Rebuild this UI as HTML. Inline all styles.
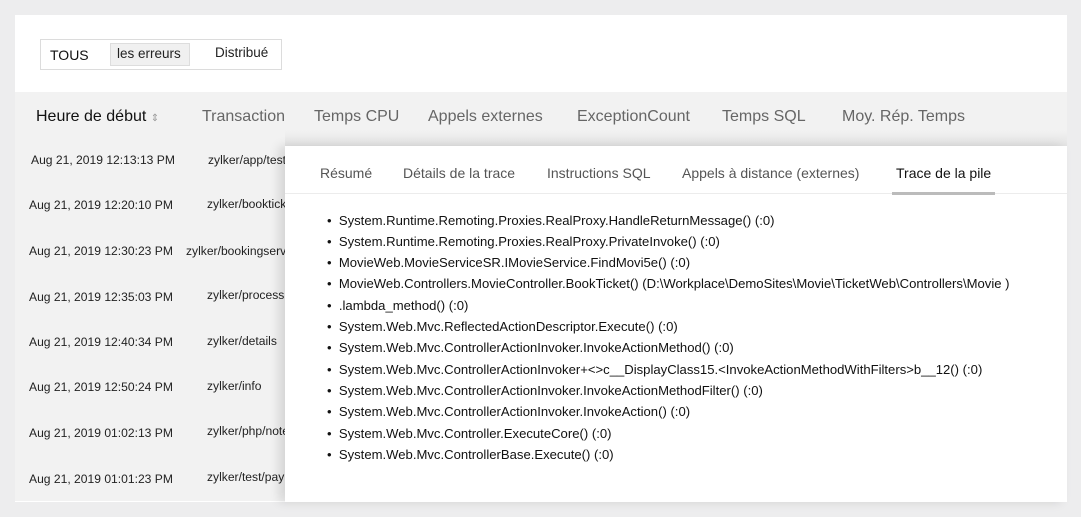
<!DOCTYPE html>
<html><head><meta charset="utf-8"><style>
body{margin:0;width:1081px;height:517px;background:#ededee;font-family:"Liberation Sans",sans-serif;position:relative;overflow:hidden}
.abs{position:absolute;white-space:nowrap}
#top{left:15px;top:15px;width:1052px;height:77px;background:#fff}
#seg{left:40px;top:39px;width:240px;height:29px;border:1px solid #dcdcdc;background:#fff}
#tbl{left:15px;top:92px;width:1052px;height:409px;background:#f2f2f2;border-bottom:1px solid #fff}
.h{top:108px;font-size:16px;color:#666}
.d{font-size:12.1px;color:#222}
#pop{left:285px;top:146px;width:782px;height:356px;background:#fff;box-shadow:-6px 0 10px rgba(0,0,0,.12)}
.t{top:165px;font-size:14px;color:#555}
.s{left:327px;font-size:13.1px;color:#111}
</style></head><body>
<div class="abs" id="top"></div>
<div class="abs" id="seg"></div>
<div class="abs" style="left:50px;top:47px;font-size:14px;color:#111">TOUS</div>
<div class="abs" style="left:110px;top:43px;width:78px;height:21px;background:#f0f0f0;border:1px solid #ddd"></div>
<div class="abs" style="left:117px;top:46px;font-size:13.5px;color:#222">les erreurs</div>
<div class="abs" style="left:215px;top:45px;font-size:13.5px;color:#222">Distribué</div>
<div class="abs" id="tbl"></div>
<div class="abs" style="left:285px;top:130px;width:782px;height:16px;background:linear-gradient(#f2f2f2,#e4e4e4)"></div>
<div class="abs h" style="left:36px;color:#111">Heure de début <span style="font-size:10px;color:#999">&#8661;</span></div>
<div class="abs h" style="left:202px">Transaction</div>
<div class="abs h" style="left:314px">Temps CPU</div>
<div class="abs h" style="left:428px">Appels externes</div>
<div class="abs h" style="left:577px">ExceptionCount</div>
<div class="abs h" style="left:722px">Temps SQL</div>
<div class="abs h" style="left:842px">Moy. Rép. Temps</div>
<div class="abs d" style="left:31px;top:153px">Aug 21, 2019 12:13:13 PM</div><div class="abs d" style="left:208px;top:153px">zylker/app/test</div>
<div class="abs d" style="left:29px;top:198px">Aug 21, 2019 12:20:10 PM</div><div class="abs d" style="left:207px;top:197px">zylker/bookticket</div>
<div class="abs d" style="left:29px;top:244px">Aug 21, 2019 12:30:23 PM</div><div class="abs d" style="left:186px;top:244px">zylker/bookingservice</div>
<div class="abs d" style="left:29px;top:290px">Aug 21, 2019 12:35:03 PM</div><div class="abs d" style="left:207px;top:288px">zylker/process</div>
<div class="abs d" style="left:29px;top:335px">Aug 21, 2019 12:40:34 PM</div><div class="abs d" style="left:207px;top:334px">zylker/details</div>
<div class="abs d" style="left:29px;top:380px">Aug 21, 2019 12:50:24 PM</div><div class="abs d" style="left:207px;top:379px">zylker/info</div>
<div class="abs d" style="left:29px;top:426px">Aug 21, 2019 01:02:13 PM</div><div class="abs d" style="left:207px;top:424px">zylker/php/notes</div>
<div class="abs d" style="left:29px;top:472px">Aug 21, 2019 01:01:23 PM</div><div class="abs d" style="left:207px;top:470px">zylker/test/pay</div>
<div class="abs" id="pop"></div>
<div class="abs" style="left:285px;top:193px;width:782px;height:1px;background:#ececec"></div>
<div class="abs t" style="left:320px">Résumé</div>
<div class="abs t" style="left:403px">Détails de la trace</div>
<div class="abs t" style="left:547px">Instructions SQL</div>
<div class="abs t" style="left:682px">Appels à distance (externes)</div>
<div class="abs t" style="left:896px;color:#111">Trace de la pile</div>
<div class="abs" style="left:892px;top:192px;width:103px;height:3px;background:#bbb"></div>
<div class="abs s" style="top:213px">• &nbsp;System.Runtime.Remoting.Proxies.RealProxy.HandleReturnMessage() (:0)</div>
<div class="abs s" style="top:234px">• &nbsp;System.Runtime.Remoting.Proxies.RealProxy.PrivateInvoke() (:0)</div>
<div class="abs s" style="top:255px">• &nbsp;MovieWeb.MovieServiceSR.IMovieService.FindMovi5e() (:0)</div>
<div class="abs s" style="top:276px">• &nbsp;MovieWeb.Controllers.MovieController.BookTicket() (D:\Workplace\DemoSites\Movie\TicketWeb\Controllers\Movie )</div>
<div class="abs s" style="top:298px">• &nbsp;.lambda_method() (:0)</div>
<div class="abs s" style="top:319px">• &nbsp;System.Web.Mvc.ReflectedActionDescriptor.Execute() (:0)</div>
<div class="abs s" style="top:340px">• &nbsp;System.Web.Mvc.ControllerActionInvoker.InvokeActionMethod() (:0)</div>
<div class="abs s" style="top:362px">• &nbsp;System.Web.Mvc.ControllerActionInvoker+&lt;&gt;c__DisplayClass15.&lt;InvokeActionMethodWithFilters&gt;b__12() (:0)</div>
<div class="abs s" style="top:383px">• &nbsp;System.Web.Mvc.ControllerActionInvoker.InvokeActionMethodFilter() (:0)</div>
<div class="abs s" style="top:404px">• &nbsp;System.Web.Mvc.ControllerActionInvoker.InvokeAction() (:0)</div>
<div class="abs s" style="top:426px">• &nbsp;System.Web.Mvc.Controller.ExecuteCore() (:0)</div>
<div class="abs s" style="top:447px">• &nbsp;System.Web.Mvc.ControllerBase.Execute() (:0)</div>
</body></html>
